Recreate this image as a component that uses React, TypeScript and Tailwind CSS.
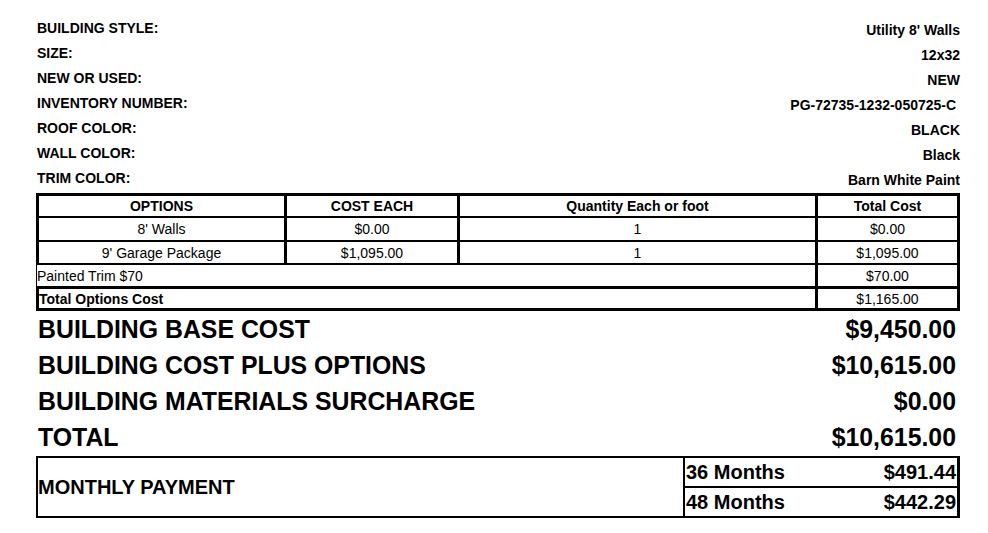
import React from "react";

const info: [string, string][] = [
  ["BUILDING STYLE:", "Utility 8' Walls"],
  ["SIZE:", "12x32"],
  ["NEW OR USED:", "NEW"],
  ["INVENTORY NUMBER:", "PG-72735-1232-050725-C\u00A0"],
  ["ROOF COLOR:", "BLACK"],
  ["WALL COLOR:", "Black"],
  ["TRIM COLOR:", "Barn White Paint"],
];

const big: [string, string][] = [
  ["BUILDING BASE COST", "$9,450.00"],
  ["BUILDING COST PLUS OPTIONS", "$10,615.00"],
  ["BUILDING MATERIALS SURCHARGE", "$0.00"],
  ["TOTAL", "$10,615.00"],
];

export default function App() {
  return (
    <div
      className="w-[988px] h-[533px] bg-white text-black overflow-hidden"
      style={{ fontFamily: '"Liberation Sans", Arial, sans-serif' }}
    >
      {/* info section */}
      <div className="ml-[36px] w-[924px] pt-[16px]">
        {info.map(([l, v]) => (
          <div key={l} className="flex justify-between items-start h-[25px]">
            <span className="font-bold text-[14px] leading-[25px] pl-px">{l}</span>
            <span className="font-bold text-[14px] leading-[25px] mt-[2px] whitespace-pre">{v}</span>
          </div>
        ))}
      </div>

      {/* options table */}
      <div className="ml-[36px] w-[924px] mt-[2px] text-[14px] leading-none">
        <div className="flex h-[23px] border-t-[3px] border-black font-bold">
          <div className="w-[248px] border-l-[3px] border-black flex items-center justify-center">OPTIONS</div>
          <div className="w-[173px] border-l-[3px] border-black flex items-center justify-center">COST EACH</div>
          <div className="w-[358px] border-l-[3px] border-black flex items-center justify-center">Quantity Each or foot</div>
          <div className="w-[145px] border-l-[3px] border-r-[3px] border-black flex items-center justify-center">Total Cost</div>
        </div>
        <div className="flex h-[24px] border-t-[2px] border-black">
          <div className="w-[248px] border-l-[3px] border-black flex items-center justify-center">8' Walls</div>
          <div className="w-[173px] border-l-[3px] border-black flex items-center justify-center">$0.00</div>
          <div className="w-[358px] border-l-[3px] border-black flex items-center justify-center">1</div>
          <div className="w-[145px] border-l-[3px] border-r-[3px] border-black flex items-center justify-center">$0.00</div>
        </div>
        <div className="flex h-[23px] border-t-[2px] border-black">
          <div className="w-[248px] border-l-[3px] border-black flex items-center justify-center">9' Garage Package</div>
          <div className="w-[173px] border-l-[3px] border-black flex items-center justify-center">$1,095.00</div>
          <div className="w-[358px] border-l-[3px] border-black flex items-center justify-center">1</div>
          <div className="w-[145px] border-l-[3px] border-r-[3px] border-black flex items-center justify-center">$1,095.00</div>
        </div>
        <div className="flex h-[23px] border-t-[2px] border-black">
          <div className="w-[779px] border-l border-black flex items-center">Painted Trim $70</div>
          <div className="w-[145px] border-l-[3px] border-r-[3px] border-black flex items-center justify-center">$70.00</div>
        </div>
        <div className="flex h-[25px] border-t-[3px] border-b-[3px] border-black">
          <div className="w-[779px] border-l-[3px] border-black flex items-center font-bold">Total Options Cost</div>
          <div className="w-[145px] border-l-[3px] border-r-[3px] border-black flex items-center justify-center">$1,165.00</div>
        </div>
      </div>

      {/* big totals */}
      <div className="ml-[36px] w-[924px] pt-[1px]">
        {big.map(([l, v]) => (
          <div key={l} className="flex justify-between h-[36px] text-[24.85px] font-bold leading-[36px] pl-[2px] pr-[4px]">
            <span>{l}</span>
            <span>{v}</span>
          </div>
        ))}
      </div>

      {/* monthly payment */}
      <div className="ml-[36px] w-[924px] h-[62px] border-2 border-black flex">
        <div className="flex-1 flex items-center font-bold text-[20px] leading-none">MONTHLY PAYMENT</div>
        <div className="w-[275px] border-l-2 border-r border-black flex flex-col font-bold text-[20px] leading-none">
          <div className="h-[30px] border-b-2 border-black flex items-center justify-between pl-px pr-px">
            <span>36 Months</span>
            <span>$491.44</span>
          </div>
          <div className="flex-1 flex items-center justify-between pl-px pr-px">
            <span>48 Months</span>
            <span>$442.29</span>
          </div>
        </div>
      </div>
    </div>
  );
}
